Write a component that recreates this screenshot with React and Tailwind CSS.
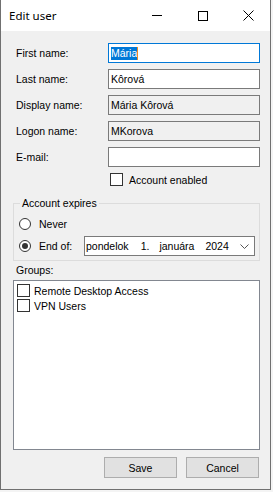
import React from "react";

const F = "font-['Liberation_Sans',Arial,sans-serif]";

function Field({ label, children, readOnly, focused }) {
  return (
    <div className="flex items-center h-[20px] pl-[3px]">
      <span className="w-[92px] leading-[12px]">{label}</span>
      <div
        className={
          "w-[152px] h-[20px] border flex items-center pl-[2px] leading-[12px] " +
          (focused
            ? "border-[#0078d7] bg-white"
            : readOnly
            ? "border-[#7a7a7a] bg-[#f0f0f0]"
            : "border-[#7a7a7a] bg-white")
        }
      >
        {children}
      </div>
    </div>
  );
}

function Check() {
  return <div className="w-[13px] h-[13px] border border-[#333333] bg-white shrink-0" />;
}

export default function App() {
  return (
    <div className={"w-[273px] h-[492px] bg-[#f4f4f4] text-[10.5px] text-black " + F}>
      <div className="w-[271px] h-[490px] border-x border-b border-[#707070] bg-[#f0f0f0] flex flex-col">
        {/* Title bar */}
        <div className="h-[31px] bg-white flex items-center shrink-0">
          <span className="pl-[8px] text-[11.5px] font-['Noto_Sans',sans-serif] flex-1">Edit user</span>
          <div className="w-[46px] h-[30px] flex items-center justify-center">
            <div className="w-[10px] h-px bg-black" />
          </div>
          <div className="w-[46px] h-[30px] flex items-center justify-center">
            <div className="w-[10px] h-[10px] border border-black" />
          </div>
          <div className="w-[44px] h-[30px] flex items-center justify-center">
            <svg width="11" height="11" viewBox="0 0 11 11">
              <path d="M0.5 0.5L10.5 10.5M10.5 0.5L0.5 10.5" stroke="#000" strokeWidth="1" fill="none" />
            </svg>
          </div>
        </div>

        {/* Body */}
        <div className="flex flex-col pl-[12px] pr-[10px] pt-[12px]">
          <div className="flex flex-col gap-[6px]">
            <Field label="First name:" focused>
              <span className="bg-[#0078d7] text-white leading-[13px] h-[13px] flex items-center">Mária</span>
              <span className="w-[1px] h-[13px] bg-[#f08a24]" />
            </Field>
            <Field label="Last name:">Kôrová</Field>
            <Field label="Display name:" readOnly>Mária Kôrová</Field>
            <Field label="Logon name:" readOnly>MKorova</Field>
            <Field label="E-mail:"></Field>
          </div>

          <div className="flex items-center h-[13px] mt-[6px] pl-[97px]">
            <Check />
            <span className="ml-[6px] leading-[12px]">Account enabled</span>
          </div>

          <fieldset className="mt-[11px] border border-[#dcdcdc] pb-[4px]">
            <legend className="ml-[6px] px-[2px] leading-[12px]">Account expires</legend>
            <div className="flex flex-col gap-[2px] pt-[5px] pl-[5px]">
              <div className="flex items-center h-[20px]">
                <div className="w-[12px] h-[12px] rounded-full border border-[#333333] bg-white shrink-0" />
                <span className="ml-[8px] leading-[12px]">Never</span>
              </div>
              <div className="flex items-center h-[20px]">
                <div className="w-[12px] h-[12px] rounded-full border border-[#333333] bg-white shrink-0 flex items-center justify-center">
                  <div className="w-[6px] h-[6px] rounded-full bg-[#333333]" />
                </div>
                <span className="ml-[8px] w-[45px] leading-[12px]">End of:</span>
                <div className="w-[171px] h-[20px] border border-[#7a7a7a] bg-white flex items-center pl-[1px] pr-[5px] leading-[12px]">
                  <span>pondelok</span>
                  <span className="ml-[12px]">1.</span>
                  <span className="ml-[10px]">januára</span>
                  <span className="ml-[11px]">2024</span>
                  <span className="flex-1" />
                  <svg width="9" height="5" viewBox="0 0 9 5">
                    <path d="M0.5 0.5L4.5 4.5L8.5 0.5" stroke="#555" strokeWidth="1" fill="none" />
                  </svg>
                </div>
              </div>
            </div>
          </fieldset>

          <div className="mt-[3px] pl-[3px] leading-[12px]">Groups:</div>

          <div className="mt-[4px] h-[170px] border border-[#828790] bg-white pt-[2px] pl-[3px] flex flex-col">
            <div className="flex items-center h-[15px]">
              <Check />
              <span className="ml-[4px] leading-[12px]">Remote Desktop Access</span>
            </div>
            <div className="flex items-center h-[15px]">
              <Check />
              <span className="ml-[4px] leading-[12px]">VPN Users</span>
            </div>
          </div>

          <div className="mt-[7px] flex justify-end gap-[9px] pr-[1px]">
            <div className="w-[73px] h-[21px] border border-[#adadad] bg-[#e1e1e1] flex items-center justify-center leading-[12px]">
              Save
            </div>
            <div className="w-[73px] h-[21px] border border-[#adadad] bg-[#e1e1e1] flex items-center justify-center leading-[12px]">
              Cancel
            </div>
          </div>
        </div>
      </div>
    </div>
  );
}
